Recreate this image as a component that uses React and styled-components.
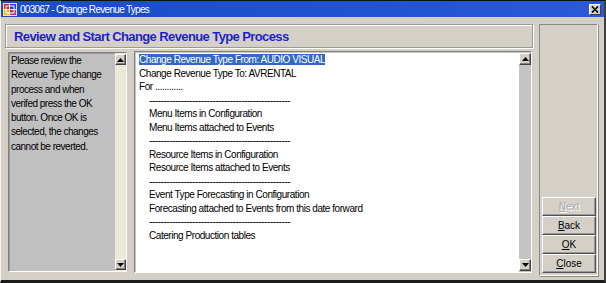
import React from "react";
import styled, { createGlobalStyle } from "styled-components";

const GlobalStyle = createGlobalStyle`
  html, body {
    margin: 0;
    padding: 0;
    background: #ffffff;
  }
  body {
    font-family: "Liberation Sans", Arial, sans-serif;
  }
`;

const Window = styled.div`
  width: 606px;
  height: 283px;
  box-sizing: border-box;
  background: #d4d0c8;
  border-top: 1px solid #101010;
  border-left: 1px solid #f4f4f4;
  border-right: 2px solid #404040;
  border-bottom: 3px solid #1c1c1c;
  display: flex;
  flex-direction: column;
  overflow: hidden;
`;

const TitleBar = styled.div`
  height: 16px;
  flex: none;
  display: flex;
  align-items: center;
  padding: 0 2px 0 2px;
  background: linear-gradient(90deg, #1a4cc6 0%, #2152d2 60%, #2a5ada 100%);
  color: #ffffff;
  font-size: 10px;
  letter-spacing: -0.7px;
`;

const TitleText = styled.span`
  flex: 1;
  margin-left: 3px;
`;

const CloseButton = styled.div`
  width: 12px;
  height: 11px;
  box-sizing: border-box;
  background: #d4d0c8;
  border: 1px solid;
  border-color: #ffffff #404040 #404040 #ffffff;
  display: flex;
  align-items: center;
  justify-content: center;
  margin-right: 1px;
`;

const Body = styled.div`
  flex: 1;
  display: flex;
  padding: 7px 0 0 4px;
`;

const MainCol = styled.div`
  width: 528px;
  display: flex;
  flex-direction: column;
`;

const Header = styled.div`
  height: 24px;
  box-sizing: border-box;
  border: 1px solid #9c9a94;
  box-shadow: inset 1px 1px 0 #ffffff, 1px 1px 0 #ffffff;
  display: flex;
  align-items: center;
  padding-left: 8px;
  color: #1f1fcf;
  font-weight: bold;
  font-size: 13px;
  letter-spacing: -0.6px;
`;

const ContentRow = styled.div`
  display: flex;
  align-items: flex-start;
  gap: 7px;
  margin-top: 3px;
  padding-left: 3px;
`;

const HelpBox = styled.div`
  width: 119px;
  height: 220px;
  margin-top: 1px;
  box-sizing: border-box;
  display: flex;
  border: 1px solid;
  border-color: #808080 #ffffff #ffffff #808080;
`;

const HelpText = styled.div`
  flex: 1;
  background: #c0c0c0;
  border-top: 1px solid #9a9a9a;
  border-left: 1px solid #9a9a9a;
  padding: 0 0 0 1px;
  font-size: 10px;
  letter-spacing: -0.5px;
  line-height: 14.3px;
  color: #000000;
`;

const ScrollBar = styled.div`
  width: ${(p) => p.width}px;
  flex: none;
  background: ${(p) => p.track};
  display: flex;
  flex-direction: column;
  justify-content: space-between;
  padding: 1px 0;
  box-sizing: border-box;
`;

const ScrollButton = styled.div`
  width: ${(p) => p.size}px;
  height: ${(p) => p.size}px;
  box-sizing: border-box;
  background: #d4d0c8;
  border: 1px solid;
  border-color: #ffffff #404040 #404040 #ffffff;
  box-shadow: inset -1px -1px 0 #808080;
  display: flex;
  align-items: center;
  justify-content: center;
`;

const TextBox = styled.div`
  width: 398px;
  height: 222px;
  box-sizing: border-box;
  display: flex;
  border: 1px solid;
  border-color: #808080 #ffffff #ffffff #808080;
  box-shadow: inset 1px 1px 0 #c8c8c8;
  background: #ffffff;
`;

const TextContent = styled.div`
  flex: 1;
  padding: 1px 0 0 4px;
  font-size: 10px;
  letter-spacing: -0.45px;
  line-height: 13.54px;
  color: #000000;
  white-space: pre;
`;

const TextLine = styled.div`
  padding-left: ${(p) => (p.indent ? 10 : 0)}px;
  height: 13.54px;
`;

const Selected = styled.span`
  background: #316ac5;
  color: #ffffff;
`;

const SidePanel = styled.div`
  width: 59px;
  height: 252px;
  margin-left: 6px;
  box-sizing: border-box;
  border: 1px solid;
  border-color: #8a8884 #ffffff #ffffff #8a8884;
  box-shadow: 1px 1px 0 #8a8884;
  display: flex;
  flex-direction: column;
  justify-content: flex-end;
  padding: 0 1px 2px 2px;
`;

const Button = styled.div`
  height: 19px;
  box-sizing: border-box;
  border: 1px solid;
  border-color: #ffffff #505050 #505050 #ffffff;
  box-shadow: inset -1px -1px 0 #9a9a9a;
  background: #d4d0c8;
  display: flex;
  align-items: center;
  justify-content: center;
  font-size: 10px;
  color: ${(p) => (p.disabled ? "#a8a8a8" : "#000000")};
  text-shadow: ${(p) => (p.disabled ? "1px 1px 0 #ffffff" : "none")};
  & u {
    text-decoration: underline;
  }
`;

const Arrow = ({ dir }) => (
  <svg width="7" height="4" viewBox="0 0 7 4">
    {dir === "up" ? (
      <polygon points="3.5,0 7,4 0,4" fill="#000" />
    ) : (
      <polygon points="0,0 7,0 3.5,4" fill="#000" />
    )}
  </svg>
);

const AppIcon = () => (
  <svg width="14" height="13" viewBox="0 0 14 13">
    <rect x="0" y="0" width="14" height="13" fill="#f0e0c0" />
    <rect x="1" y="1" width="5" height="5" fill="#d02020" />
    <rect x="7" y="1" width="6" height="5" fill="#2040c0" />
    <rect x="1" y="7" width="5" height="5" fill="#e8c020" />
    <rect x="7" y="7" width="6" height="5" fill="#c03080" />
    <rect x="3" y="3" width="8" height="7" fill="none" stroke="#ffffff" strokeWidth="1" />
  </svg>
);

const CloseIcon = () => (
  <svg width="8" height="7" viewBox="0 0 8 7">
    <path d="M1 0.5 L7 6.5 M7 0.5 L1 6.5" stroke="#000" strokeWidth="1.6" />
  </svg>
);

const dashes = "-".repeat(49);

const lines = [
  { text: "Change Revenue Type From: AUDIO VISUAL", selected: true },
  { text: "Change Revenue Type To: AVRENTAL" },
  { text: "For ............" },
  { text: dashes, indent: true },
  { text: "Menu Items in Configuration", indent: true },
  { text: "Menu Items attached to Events", indent: true },
  { text: dashes, indent: true },
  { text: "Resource Items in Configuration", indent: true },
  { text: "Resource Items attached to Events", indent: true },
  { text: dashes, indent: true },
  { text: "Event Type Forecasting in Configuration", indent: true },
  { text: "Forecasting attached to Events from this date forward", indent: true },
  { text: dashes, indent: true },
  { text: "Catering Production tables", indent: true },
];

const helpLines = [
  "Please review the",
  "Revenue Type change",
  "process and when",
  "verifed press the OK",
  "button. Once OK is",
  "selected, the changes",
  "cannot be reverted.",
];

export default function App() {
  return (
    <>
      <GlobalStyle />
      <Window>
        <TitleBar>
          <AppIcon />
          <TitleText>003067 - Change Revenue Types</TitleText>
          <CloseButton>
            <CloseIcon />
          </CloseButton>
        </TitleBar>
        <Body>
          <MainCol>
            <Header>Review and Start Change Revenue Type Process</Header>
            <ContentRow>
              <HelpBox>
                <HelpText>
                  {helpLines.map((l) => (
                    <div key={l}>{l}</div>
                  ))}
                </HelpText>
                <ScrollBar width={11} track="#ede9d8">
                  <ScrollButton size={11}>
                    <Arrow dir="up" />
                  </ScrollButton>
                  <ScrollButton size={11}>
                    <Arrow dir="down" />
                  </ScrollButton>
                </ScrollBar>
              </HelpBox>
              <TextBox>
                <TextContent>
                  {lines.map((l, i) => (
                    <TextLine key={i} indent={l.indent}>
                      {l.selected ? <Selected>{l.text}</Selected> : l.text}
                    </TextLine>
                  ))}
                </TextContent>
                <ScrollBar width={12} track="#c4c4c4">
                  <ScrollButton size={12}>
                    <Arrow dir="up" />
                  </ScrollButton>
                  <ScrollButton size={12}>
                    <Arrow dir="down" />
                  </ScrollButton>
                </ScrollBar>
              </TextBox>
            </ContentRow>
          </MainCol>
          <SidePanel>
            <Button disabled>
              <span>
                <u>N</u>ext
              </span>
            </Button>
            <Button>
              <span>
                <u>B</u>ack
              </span>
            </Button>
            <Button>
              <span>
                <u>O</u>K
              </span>
            </Button>
            <Button>
              <span>
                <u>C</u>lose
              </span>
            </Button>
          </SidePanel>
        </Body>
      </Window>
    </>
  );
}
